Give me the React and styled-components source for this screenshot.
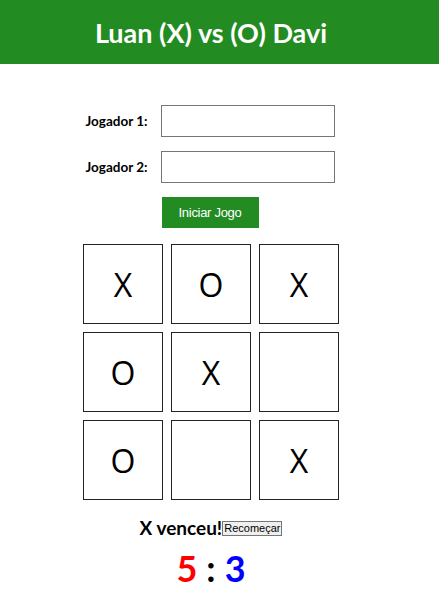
import React from "react";
import styled, { createGlobalStyle } from "styled-components";

const Global = createGlobalStyle`
  body { margin: 0; background: #fff; font-family: Lato, "Open Sans", sans-serif; }
`;

const Header = styled.header`
  background: #228b22;
  height: 64px;
  display: flex;
  align-items: center;
`;

const Title = styled.h1`
  margin: 0;
  width: 422px;
  text-align: center;
  color: #fff;
  font-family: Lato, sans-serif;
  font-weight: 700;
  font-size: 27px;
`;

const Main = styled.main`
  width: 422px;
  display: flex;
  flex-direction: column;
  align-items: center;
`;

const Form = styled.div`
  margin-top: 41px;
  margin-left: -2px;
  display: grid;
  grid-template-columns: auto 174px;
  column-gap: 13px;
  row-gap: 14px;
  align-items: center;
`;

const Label = styled.label`
  font-family: Lato, sans-serif;
  font-weight: 700;
  font-size: 13.5px;
  color: #000;
`;

const Input = styled.input`
  box-sizing: border-box;
  width: 174px;
  height: 32px;
  border: 1px solid #767676;
  margin: 0;
  padding: 2px 6px;
`;

const StartButton = styled.button`
  grid-column: 2;
  justify-self: start;
  margin-left: 1px;
  width: 97px;
  height: 31px;
  border: none;
  background: #228b22;
  color: #fff;
  font-family: "Liberation Sans", Arial, sans-serif;
  font-size: 13px;
  letter-spacing: -0.3px;
  padding: 0;
`;

const Board = styled.div`
  margin-top: 16px;
  display: grid;
  grid-template-columns: repeat(3, 80px);
  grid-auto-rows: 80px;
  gap: 8px;
`;

const Cell = styled.div`
  box-sizing: border-box;
  border: 1px solid #222;
  display: flex;
  align-items: center;
  justify-content: center;
  font-family: "Open Sans", sans-serif;
  font-size: 32px;
  color: #000;
`;

const Result = styled.div`
  margin-top: 16px;
  display: flex;
  align-items: center;
`;

const ResultText = styled.span`
  font-family: Lato, sans-serif;
  font-weight: 700;
  font-size: 19px;
`;

const RestartButton = styled.button`
  margin: 2px 0 0;
  padding: 0 1px;
  font-family: "Liberation Sans", Arial, sans-serif;
  font-size: 11px;
  height: 15px;
  line-height: 13px;
  border: 1px solid #767676;
  background: #efefef;
  border-radius: 0;
`;

const Score = styled.div`
  margin-top: 7px;
  font-family: Lato, sans-serif;
  font-weight: 700;
  font-size: 36px;
  display: flex;
  gap: 9px;
`;

const Num = styled.span`
  color: ${(p) => p.$color};
`;

const board = ["X", "O", "X", "O", "X", "", "O", "", "X"];

export default function App() {
  return (
    <>
      <Global />
      <Header>
        <Title>Luan (X) vs (O) Davi</Title>
      </Header>
      <Main>
        <Form>
          <Label>Jogador 1:</Label>
          <Input />
          <Label>Jogador 2:</Label>
          <Input />
          <StartButton>Iniciar Jogo</StartButton>
        </Form>
        <Board>
          {board.map((v, i) => (
            <Cell key={i}>{v}</Cell>
          ))}
        </Board>
        <Result>
          <ResultText>X venceu!</ResultText>
          <RestartButton>Recomeçar</RestartButton>
        </Result>
        <Score>
          <Num $color="#ff0000">5</Num>
          <Num $color="#000">:</Num>
          <Num $color="#0000ff">3</Num>
        </Score>
      </Main>
    </>
  );
}
